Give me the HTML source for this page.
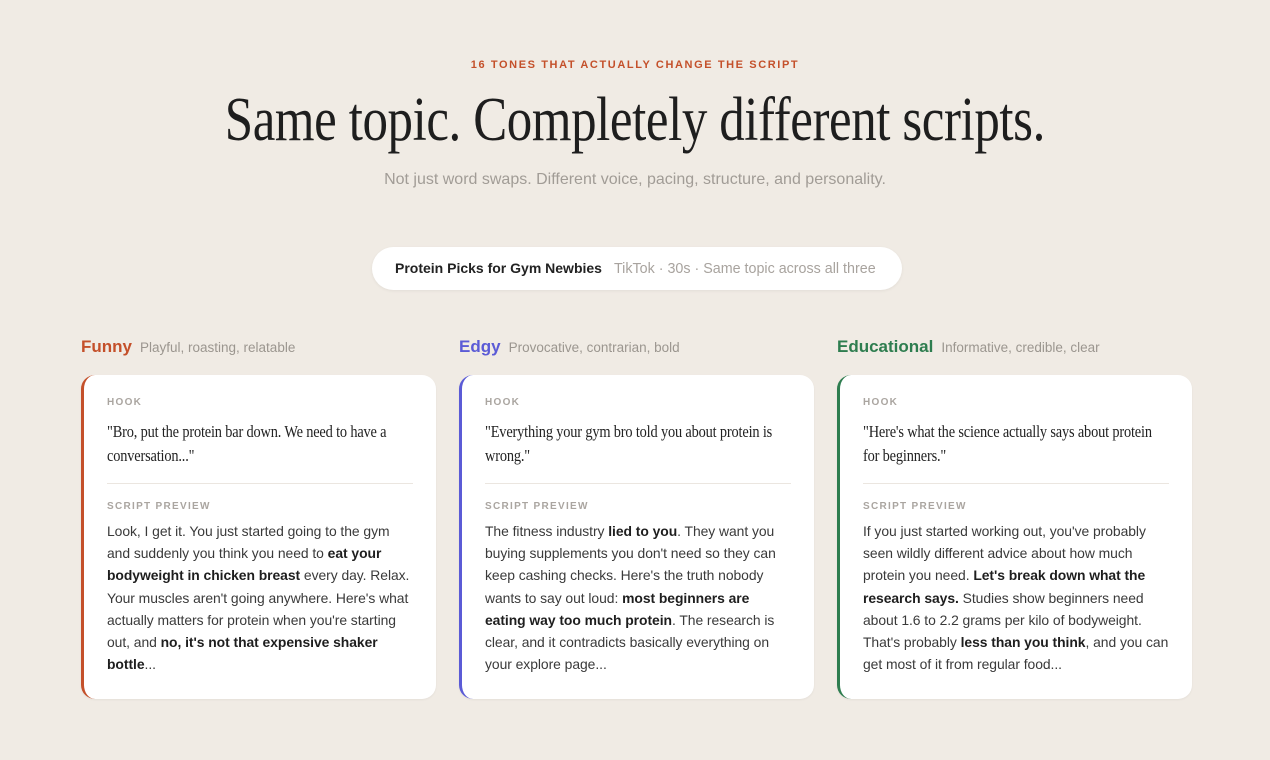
<!DOCTYPE html>
<html><head><meta charset="utf-8"><style>
*{margin:0;padding:0;box-sizing:border-box}
body{width:1270px;height:760px;background:#f0ebe4;font-family:"Liberation Sans",sans-serif;color:#222;position:relative;overflow:hidden}
.eyebrow{position:absolute;top:59px;left:0;width:1270px;text-align:center;font-size:11px;font-weight:bold;letter-spacing:1.6px;color:#c4502a}
.h1wrap{position:absolute;top:85px;left:0;width:1270px;text-align:center}
.h1{display:inline-block;font-family:"Liberation Serif",serif;font-size:62px;color:#1e1e1e;transform:scaleX(0.822);white-space:nowrap;letter-spacing:-0.5px}
.sub{position:absolute;top:171px;left:0;width:1270px;text-align:center;font-size:16px;color:#a19c96}
.pill{position:absolute;left:372px;top:247px;width:530px;height:43px;background:#fff;border-radius:22px;box-shadow:0 1px 3px rgba(0,0,0,.06);font-size:14px;line-height:43px;padding-left:23px;white-space:nowrap}
.pill b{color:#222}
.pill span{color:#a8a39e;font-size:14.3px;margin-left:12px}
.lab{position:absolute;top:337px;font-size:17px;font-weight:bold;white-space:nowrap}
.lab span{font-size:13.5px;font-weight:normal;color:#9b968f;margin-left:8px}
.card{position:absolute;top:375px;width:355px;height:324px;background:#fff;border-radius:14px;border-left:3px solid;padding:22px 23px 0 23px;box-shadow:0 1px 2px rgba(0,0,0,.05)}
.k{font-size:10px;letter-spacing:1.3px;color:#aaa5a0;font-weight:bold}
.hookbox{height:63px;margin-top:12px}
.hook{font-family:"Liberation Serif",serif;font-size:17px;line-height:24px;color:#222;width:362px;transform:scaleX(0.845);transform-origin:0 0;letter-spacing:-0.2px}
.hr{border-top:1px solid #ebe6e0;margin:0 0 17px 0}
.body{font-size:13.9px;line-height:22.2px;color:#3a3a3a;margin-top:8px;letter-spacing:-0.05px}
.body b{color:#1e1e1e}
</style></head><body>
<div class="eyebrow">16 TONES THAT ACTUALLY CHANGE THE SCRIPT</div>
<div class="h1wrap"><span class="h1">Same topic. Completely different scripts.</span></div>
<div class="sub">Not just word swaps. Different voice, pacing, structure, and personality.</div>
<div class="pill"><b>Protein Picks for Gym Newbies</b><span>TikTok · 30s · Same topic across all three</span></div>

<div class="lab" style="left:81px;color:#c4502a">Funny<span>Playful, roasting, relatable</span></div>
<div class="lab" style="left:459px;color:#5b5bd6">Edgy<span>Provocative, contrarian, bold</span></div>
<div class="lab" style="left:837px;color:#2e7d4f">Educational<span>Informative, credible, clear</span></div>

<div class="card" style="left:81px;border-color:#c4502a">
<div class="k">HOOK</div>
<div class="hookbox"><div class="hook">"Bro, put the protein bar down. We need to have a conversation..."</div></div>
<div class="hr"></div>
<div class="k">SCRIPT PREVIEW</div>
<div class="body">Look, I get it. You just started going to the gym and suddenly you think you need to <b>eat your bodyweight in chicken breast</b> every day. Relax. Your muscles aren't going anywhere. Here's what actually matters for protein when you're starting out, and <b>no, it's not that expensive shaker bottle</b>...</div>
</div>
<div class="card" style="left:459px;border-color:#5b5bd6">
<div class="k">HOOK</div>
<div class="hookbox"><div class="hook">"Everything your gym bro told you about protein is wrong."</div></div>
<div class="hr"></div>
<div class="k">SCRIPT PREVIEW</div>
<div class="body">The fitness industry <b>lied to you</b>. They want you buying supplements you don't need so they can keep cashing checks. Here's the truth nobody wants to say out loud: <b>most beginners are eating way too much protein</b>. The research is clear, and it contradicts basically everything on your explore page...</div>
</div>
<div class="card" style="left:837px;border-color:#2e7d4f">
<div class="k">HOOK</div>
<div class="hookbox"><div class="hook">"Here's what the science actually says about protein for beginners."</div></div>
<div class="hr"></div>
<div class="k">SCRIPT PREVIEW</div>
<div class="body">If you just started working out, you've probably seen wildly different advice about how much protein you need. <b>Let's break down what the research says.</b> Studies show beginners need about 1.6 to 2.2 grams per kilo of bodyweight. That's probably <b>less than you think</b>, and you can get most of it from regular food...</div>
</div>
</body></html>
